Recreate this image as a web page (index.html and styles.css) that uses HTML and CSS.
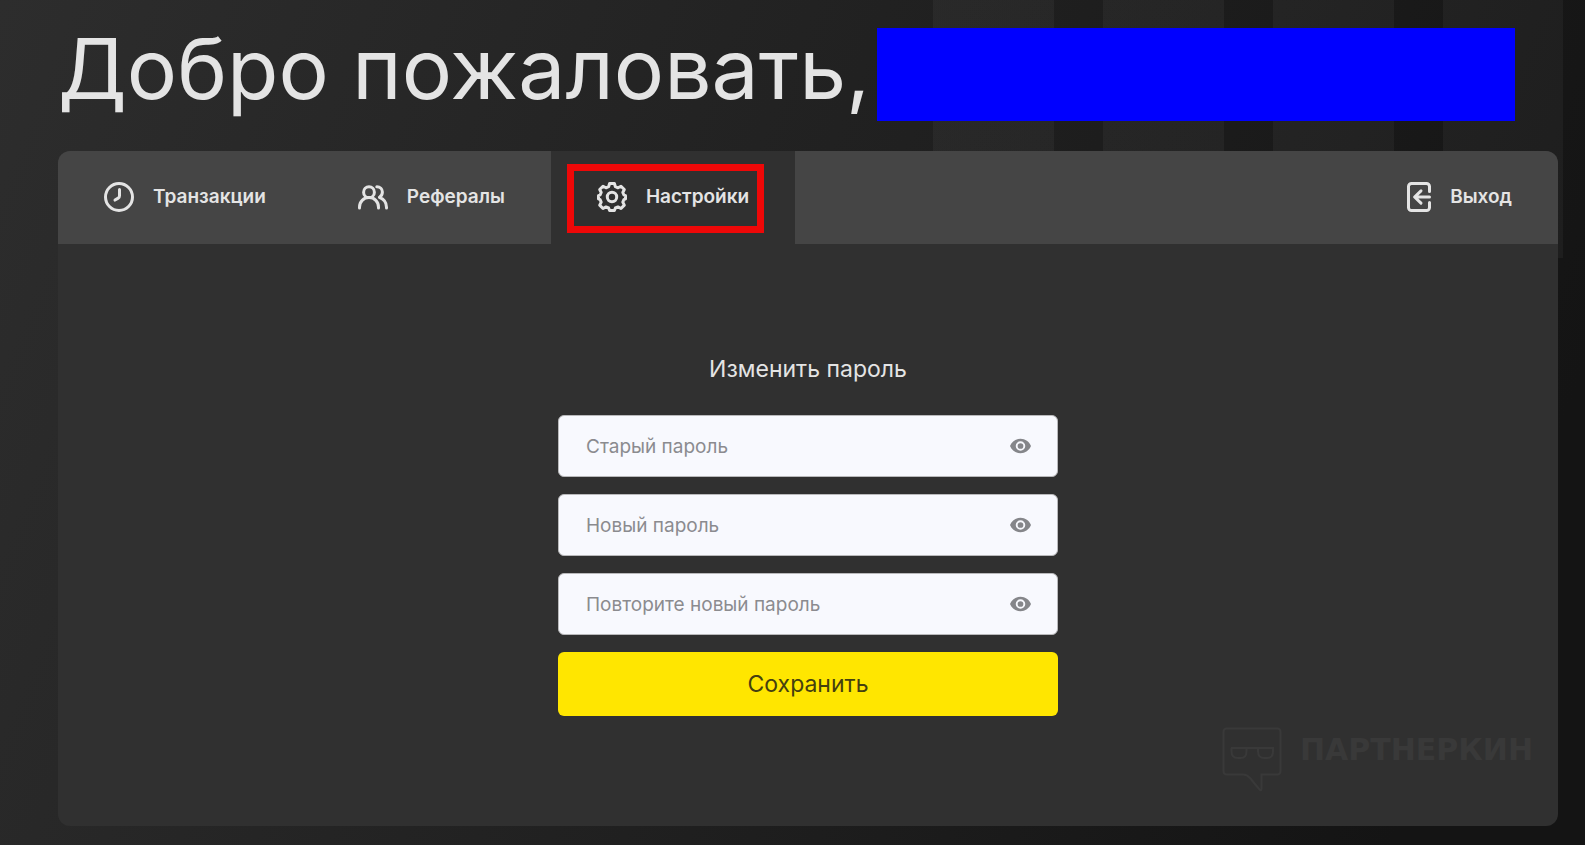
FILE: index.html
```html
<!DOCTYPE html>
<html lang="ru">
<head>
    <meta charset="UTF-8">
    <meta name="viewport" content="width=device-width, initial-scale=1.0">
    <title>Личный кабинет - Настройки</title>
    <link rel="stylesheet" href="styles.css">
</head>
<body>
    <div class="stripes"></div>

    <main class="page">
        <header class="welcome">
            <h1 class="welcome-title">Добро пожаловать,</h1>
            <span class="user-name"></span>
        </header>

        <section class="panel">
            <nav class="tabs">
                <a class="tab" href="#">
                    <svg class="tab-icon" viewBox="0 0 30 30">
                        <circle cx="15" cy="15" r="13.5"/>
                        <path d="M15.5 7.5v6.2q0 1.6-1.3 2.4l-3.200 2"/>
                    </svg>
                    <span>Транзакции</span>
                </a>
                <a class="tab" href="#">
                    <svg class="tab-icon" viewBox="0 0 30 30">
                        <circle cx="11" cy="10.2" r="5.4"/>
                        <path d="M1.5 26v-.8c0-5.500 4-9.600 9.500-9.600s9.500 4.100 9.500 9.600v.8"/>
                        <path d="M18.800 4.800c3.400 0 5.600 2.300 5.600 5.300 0 2.500-1.300 4.300-3 5.200 4.300 1.600 7.100 5.200 7.100 9.900v.8"/>
                    </svg>
                    <span>Рефералы</span>
                </a>
                <a class="tab tab-active" href="#">
                    <svg class="tab-icon" viewBox="0 0 30 30">
                        <circle cx="15" cy="15" r="4.700"/>
                        <path d="M12.600 1.500h4.800l1 3.200 2.600 1.100 3-1.600 3.300 3.300-1.500 3 1.100 2.500 1.600.7v3.200l-1.600.7-1.100 2.500 1.500 3-3.300 3.400-3-1.600-2.600 1.100-1 2.500h-4.800l-1-2.500L9 24.900l-3 1.600-3.300-3.400 1.500-3-1.100-2.500-1.600-.7v-3.200l1.600-.7 1.100-2.500-1.500-3L6 4.200l3 1.600 2.600-1.100z"/>
                    </svg>
                    <span>Настройки</span>
                    <span class="highlight"></span>
                </a>
                <a class="tab tab-exit" href="#">
                    <svg class="tab-icon tab-icon-exit" viewBox="0 0 24 30">
                        <path d="M22.500 9.500V4.500a3 3 0 0 0-3-3h-15a3 3 0 0 0-3 3v21a3 3 0 0 0 3 3h15a3 3 0 0 0 3-3v-5"/>
                        <path d="M22.500 15H8M14 8.800L7.600 15l6.400 6.200"/>
                    </svg>
                    <span>Выход</span>
                </a>
            </nav>

            <form class="password-form">
                <h2 class="form-title">Изменить пароль</h2>

                <div class="field">
                    <input class="field-input" type="password" placeholder="Старый пароль" aria-label="Старый пароль">
                    <button class="eye" type="button" aria-label="Показать пароль">
                        <svg class="eye-icon" viewBox="0 0 22 16"><path fill-rule="evenodd" d="M11 .5C6 .5 1.800 3.600 0 8c1.800 4.400 6 7.500 11 7.500s9.200-3.100 11-7.500C20.200 3.600 16 .5 11 .5zM11 13a5 5 0 1 1 0-10 5 5 0 0 1 0 10zm0-8a3 3 0 1 0 0 6 3 3 0 0 0 0-6z"/></svg>
                    </button>
                </div>
                <div class="field">
                    <input class="field-input" type="password" placeholder="Новый пароль" aria-label="Новый пароль">
                    <button class="eye" type="button" aria-label="Показать пароль">
                        <svg class="eye-icon" viewBox="0 0 22 16"><path fill-rule="evenodd" d="M11 .5C6 .5 1.800 3.600 0 8c1.800 4.400 6 7.500 11 7.500s9.200-3.100 11-7.500C20.200 3.600 16 .5 11 .5zM11 13a5 5 0 1 1 0-10 5 5 0 0 1 0 10zm0-8a3 3 0 1 0 0 6 3 3 0 0 0 0-6z"/></svg>
                    </button>
                </div>
                <div class="field">
                    <input class="field-input" type="password" placeholder="Повторите новый пароль" aria-label="Повторите новый пароль">
                    <button class="eye" type="button" aria-label="Показать пароль">
                        <svg class="eye-icon" viewBox="0 0 22 16"><path fill-rule="evenodd" d="M11 .5C6 .5 1.800 3.600 0 8c1.800 4.400 6 7.500 11 7.500s9.200-3.100 11-7.500C20.200 3.600 16 .5 11 .5zM11 13a5 5 0 1 1 0-10 5 5 0 0 1 0 10zm0-8a3 3 0 1 0 0 6 3 3 0 0 0 0-6z"/></svg>
                    </button>
                </div>

                <button class="save" type="submit">Сохранить</button>
            </form>

            <div class="watermark">
                <svg class="watermark-icon" viewBox="0 0 60 66">
                    <path d="M5 1.500h50q3.500 0 3.500 3.500v39q0 3.500-3.500 3.500H39.500v14q0 3-2 1L28 51q-3-3.500-7-3.500H5q-3.500 0-3.500-3.500V5Q1.500 1.500 5 1.500z"/>
                    <path d="M9 21h42v3.500q0 6.500-6 6.500h-2.500q-6.500 0-6.500-6.500V21M24.500 21v3.500q0 6.500-6 6.500H16q-6.500 0-6.500-6.500V21"/>
                </svg>
                <span>ПАРТНЕРКИН</span>
            </div>
        </section>
    </main>
</body>
</html>
```

FILE: styles.css
```css
* {
    margin: 0;
    padding: 0;
    box-sizing: border-box;
}

body {
    background: linear-gradient(112deg, #2d2d2d 0%, #202020 50%, #141414 90%, #141414 100%);
    font-family: Inter, "Liberation Sans", sans-serif;
    color: #e4e4e4;
    min-height: 100vh;
    position: relative;
}

/* Decorative columns in the corner */
.stripes {
    position: absolute;
    top: 0;
    right: 22px;
    width: 630px;
    height: 258px;
    background: repeating-linear-gradient(90deg, rgba(255, 255, 255, 0.04) 0, rgba(255, 255, 255, 0.04) 121px, transparent 121px, transparent 170px);
}

.page {
    position: relative;
    display: flex;
    flex-direction: column;
    min-height: 100vh;
    padding: 28px 27px 19px 58px;
}

.welcome {
    display: flex;
    align-items: flex-start;
    gap: 7px;
    height: 93px;
    margin-bottom: 30px;
}

.welcome-title {
    font-size: 84px;
    font-weight: 400;
    line-height: 82px;
    white-space: nowrap;
}

.user-name {
    flex: 1;
    align-self: stretch;
    margin-right: 43px;
    background: #0000ff;
}

.panel {
    position: relative;
    flex: 1;
    background: #303030;
    border-radius: 12px;
    overflow: hidden;
}

.tabs {
    display: flex;
    height: 93px;
    background: #454545;
}

.tab {
    position: relative;
    display: flex;
    align-items: center;
    gap: 19px;
    padding: 0 46px 2px;
    color: inherit;
    font-size: 19px;
    font-weight: 600;
    text-decoration: none;
}

.tab-active {
    background: #303030;
}

.tab-exit {
    margin-left: auto;
}

.tab-icon {
    width: 30px;
    height: 30px;
    fill: none;
    stroke: currentColor;
    stroke-width: 3;
    stroke-linecap: round;
    stroke-linejoin: round;
}

.tab-icon-exit {
    width: 24px;
}

/* Red frame around the current tab */
.highlight {
    position: absolute;
    top: 13px;
    right: 31px;
    bottom: 11px;
    left: 16px;
    border: 7px solid #ee0808;
}

.password-form {
    display: flex;
    flex-direction: column;
    gap: 17px;
    width: 500px;
    max-width: 100%;
    margin: 0 auto;
    padding: 110px 0;
}

.form-title {
    margin-bottom: 14px;
    font-size: 23px;
    font-weight: 400;
    line-height: 30px;
    text-align: center;
}

.field {
    display: flex;
    align-items: center;
    height: 62px;
    padding: 0 26px 0 27px;
    background: #f8f9fe;
    border: 1px solid #b9b9bb;
    border-radius: 6px;
}

.field-input {
    flex: 1;
    min-width: 0;
    background: none;
    border: none;
    outline: none;
    color: #303030;
    font-family: inherit;
    font-size: 19px;
}

.field-input::placeholder {
    color: #8b8b8f;
    opacity: 1;
}

.eye {
    display: flex;
    background: none;
    border: none;
    cursor: pointer;
}

.eye-icon {
    width: 21px;
    height: 16px;
    fill: #85868a;
}

.save {
    height: 64px;
    background: #ffe600;
    border: none;
    border-radius: 6px;
    color: #45400f;
    font-family: inherit;
    font-size: 23px;
    cursor: pointer;
}

.watermark {
    position: absolute;
    right: 25px;
    bottom: 33px;
    display: flex;
    gap: 18px;
    color: #393939;
    font-family: "DejaVu Sans", sans-serif;
    font-size: 30px;
    font-weight: 700;
    line-height: 46px;
}

.watermark-icon {
    width: 60px;
    height: 66px;
    fill: none;
    stroke: currentColor;
    stroke-width: 2;
}
```
